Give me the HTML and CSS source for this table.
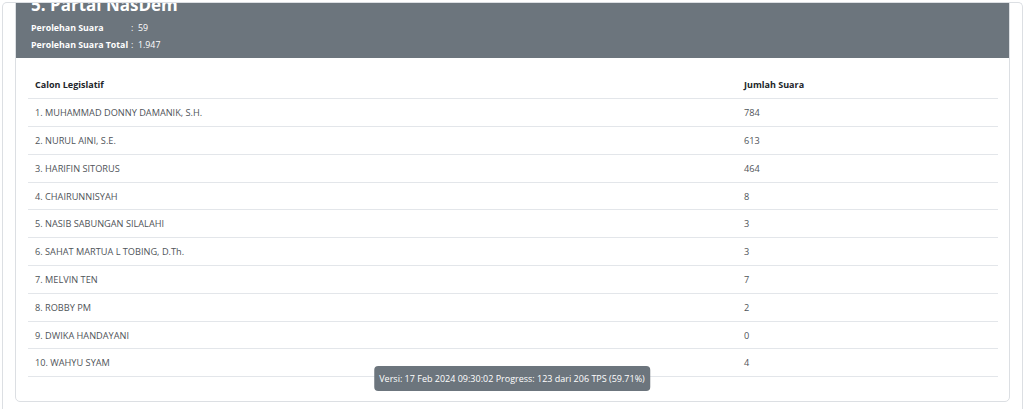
FILE: index.html
```html
<!DOCTYPE html>
<html lang="id">
<head>
<meta charset="utf-8">
<title>Partai NasDem</title>
<link rel="stylesheet" href="styles.css">
</head>
<body>
<div class="frame">
  <div class="card">
    <div class="card-header">
      <h2 class="title">5. Partai NasDem</h2>
      <div class="info">
        <span class="label">Perolehan Suara</span><span class="value">:&nbsp; 59</span>
        <span class="label">Perolehan Suara Total</span><span class="value">:&nbsp; 1.947</span>
      </div>
    </div>
    <div class="card-body">
      <table class="votes">
        <thead>
          <tr><th class="col-name">Calon Legislatif</th><th>Jumlah Suara</th></tr>
        </thead>
        <tbody>
          <tr><td>1. MUHAMMAD DONNY DAMANIK, S.H.</td><td>784</td></tr>
          <tr><td>2. NURUL AINI, S.E.</td><td>613</td></tr>
          <tr><td>3. HARIFIN SITORUS</td><td>464</td></tr>
          <tr><td>4. CHAIRUNNISYAH</td><td>8</td></tr>
          <tr><td>5. NASIB SABUNGAN SILALAHI</td><td>3</td></tr>
          <tr><td>6. SAHAT MARTUA L TOBING, D.Th.</td><td>3</td></tr>
          <tr><td>7. MELVIN TEN</td><td>7</td></tr>
          <tr><td>8. ROBBY PM</td><td>2</td></tr>
          <tr><td>9. DWIKA HANDAYANI</td><td>0</td></tr>
          <tr><td>10. WAHYU SYAM</td><td>4</td></tr>
        </tbody>
      </table>
    </div>
  </div>
</div>
<div class="toast">Versi: 17 Feb 2024 09:30:02 Progress: 123 dari 206 TPS (59.71%)</div>
</body>
</html>
```

FILE: styles.css
```css
html, body {
  margin: 0;
  padding: 0;
  background: #ffffff;
  font-family: "Open Sans", "Noto Sans", sans-serif;
  color: #212529;
}

.frame {
  box-sizing: border-box;
  margin: 2px 0 0 2px;
  width: 1021px;
  height: 407px;
  border: 1px solid #dcdfe3;
  border-bottom: none;
  border-radius: 5px 5px 0 0;
  padding: 0 12px;
  overflow: hidden;
}

.card {
  margin-top: -9px;
  border: 1px solid #dcdfe3;
  border-radius: 5px;
  overflow: hidden;
  background: #ffffff;
}

.card-header {
  background: #6c757d;
  color: #ffffff;
  padding: 0 15px 4px;
}

.title {
  margin: 0 0 5px;
  font-size: 17px;
  line-height: 20px;
  font-weight: 700;
}

.info {
  display: grid;
  grid-template-columns: max-content max-content;
  column-gap: 3px;
  font-size: 8.8px;
  font-weight: 700;
  line-height: 17px;
}

.info .value {
  font-weight: 400;
}

.card-body {
  padding: 13px 11px 24px 12px;
}

.votes {
  width: 100%;
  border-collapse: collapse;
  font-size: 9.2px;
}

.votes th,
.votes td {
  height: 27.8px;
  padding: 0 7px;
  text-align: left;
  border-bottom: 1px solid #e3e6ea;
  box-sizing: border-box;
}

.votes th {
  font-weight: 700;
  font-size: 9px;
  color: #212529;
}

.votes td {
  color: #4f5459;
}

.votes .col-name {
  width: 73.1%;
}

.toast {
  position: fixed;
  left: 50%;
  bottom: 18px;
  transform: translateX(-50%);
  background: #6c757d;
  color: #ffffff;
  font-size: 9px;
  line-height: 25px;
  padding: 0 5px;
  border-radius: 4px;
  white-space: nowrap;
}
```
